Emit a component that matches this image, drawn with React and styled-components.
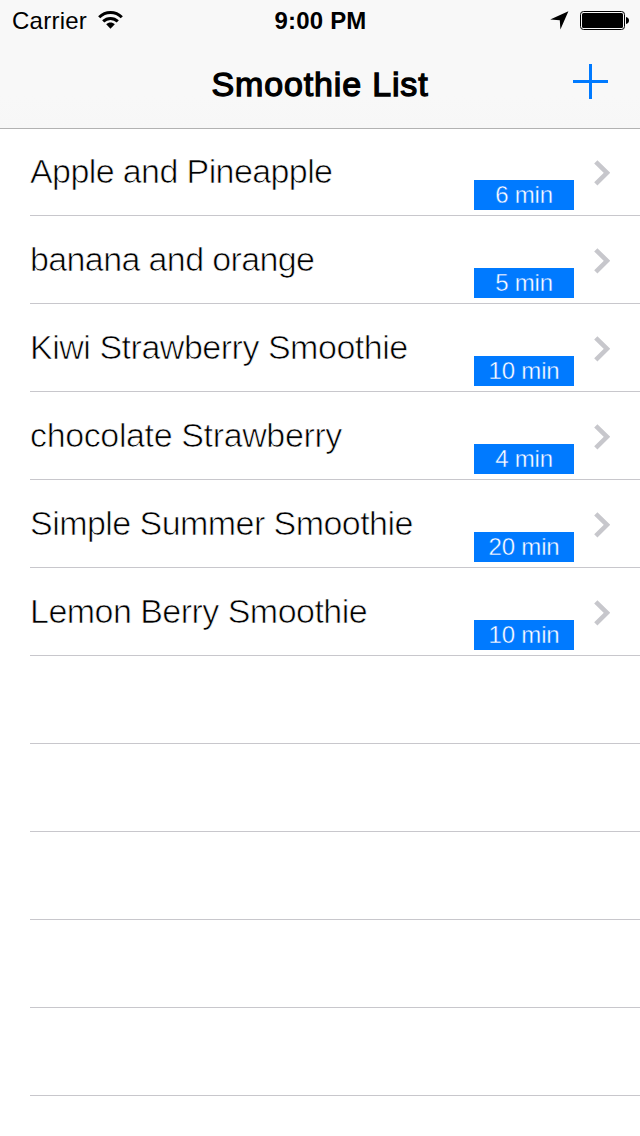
import React from "react";
import styled, { createGlobalStyle } from "styled-components";

const GlobalStyle = createGlobalStyle`
  * { box-sizing: border-box; }
  body {
    margin: 0;
    background: #fff;
    color: #000;
    font-family: "Liberation Sans", Arial, sans-serif;
  }
`;

const Screen = styled.main`
  width: 640px;
  height: 1136px;
  overflow: hidden;
  background: #fff;
`;

const Header = styled.header`
  height: 128px;
  background: linear-gradient(#f8f8f8 75%, #f7f7f7);
  box-shadow: 0 1px 0 #b2b2b2;
`;

const StatusBar = styled.div`
  display: grid;
  grid-template-columns: 1fr auto 1fr;
  align-items: center;
  height: 40px;
  padding: 0 11px 0 12px;
  font-size: 24px;
  line-height: 39px;
`;

const StatusGroup = styled.div`
  display: flex;
  align-items: center;
  justify-content: ${(p) => (p.$end ? "flex-end" : "flex-start")};
  gap: 11px;
`;

const Carrier = styled.span`
  padding-top: 1px;
  letter-spacing: 0.25px;
`;

const Clock = styled.time`
  padding-top: 1px;
  font-weight: 700;
  letter-spacing: 0.2px;
`;

const NavBar = styled.nav`
  display: grid;
  grid-template-columns: 1fr auto 1fr;
  align-items: center;
  height: 88px;
  padding: 0 32px;
`;

const Title = styled.h1`
  grid-column: 2;
  margin: 0;
  font-size: 34px;
  font-weight: 400;
  line-height: 88px;
  letter-spacing: 0.85px;
  -webkit-text-stroke: 1.3px #000;
`;

const AddButton = styled.button`
  display: flex;
  justify-self: end;
  margin: 0 0 5px;
  padding: 0;
  border: 0;
  background: none;
`;

const List = styled.ul`
  margin: 0;
  padding: 0 0 0 30px;
  list-style: none;
`;

const Row = styled.li`
  display: flex;
  height: 88px;
  padding-right: 30px;
  border-bottom: 1px solid #c8c7cc;
`;

const Name = styled.span`
  flex: 1;
  font-size: 34px;
  line-height: 86px;
  white-space: nowrap;
  letter-spacing: ${(p) => p.$spacing}px;
  -webkit-text-stroke: 0.7px #fff;
`;

const Duration = styled.span`
  width: 100px;
  height: 30px;
  margin: 52px 20px 0 0;
  background: #007aff;
  color: #fff;
  font-size: 24px;
  line-height: 29px;
  letter-spacing: -0.2px;
  text-align: center;
  -webkit-text-stroke: 0.4px #007aff;
`;

const Chevron = styled.svg`
  margin-top: 32px;
`;

const smoothies = [
  { name: "Apple and Pineapple", minutes: 6, spacing: -0.6 },
  { name: "banana and orange", minutes: 5, spacing: -0.62 },
  { name: "Kiwi Strawberry Smoothie", minutes: 10, spacing: -0.48 },
  { name: "chocolate Strawberry", minutes: 4, spacing: -0.37 },
  { name: "Simple Summer Smoothie", minutes: 20, spacing: -0.55 },
  { name: "Lemon Berry Smoothie", minutes: 10, spacing: -0.53 },
];
const emptyRows = [0, 1, 2, 3, 4];

const WifiIcon = () => (
  <svg width="25" height="18" viewBox="0 0 25 18">
    <g fill="none" stroke="#000" strokeWidth="3">
      <path d="M1.2 6.3C7.5-.1 17.5-.1 23.8 6.3" />
      <path d="M5.2 10.4C9.3 6.4 15.7 6.4 19.8 10.4" />
    </g>
    <path d="M8.2 13.3c2.4-2.3 6.2-2.3 8.6 0L12.5 17.8z" />
  </svg>
);

const LocationIcon = () => (
  <svg width="19" height="19" viewBox="0 0 19 19">
    <path d="M18.4.2 10.4 18.5 9.8 9.2.2 8.4z" />
  </svg>
);

const BatteryIcon = () => (
  <svg width="49" height="19" viewBox="0 0 49 19">
    <rect x=".5" y=".5" width="44" height="18" rx="3" fill="none" stroke="#000" />
    <rect x="2" y="2" width="41" height="15" rx="1.5" />
    <path d="M46 6c2 .3 3 1.6 3 3.5s-1 3.2-3 3.5z" />
  </svg>
);

export default function App() {
  return (
    <Screen>
      <GlobalStyle />
      <Header>
        <StatusBar>
          <StatusGroup>
            <Carrier>Carrier</Carrier>
            <WifiIcon />
          </StatusGroup>
          <Clock>9:00 PM</Clock>
          <StatusGroup $end>
            <LocationIcon />
            <BatteryIcon />
          </StatusGroup>
        </StatusBar>
        <NavBar>
          <Title>Smoothie List</Title>
          <AddButton aria-label="Add">
            <svg width="35" height="35" viewBox="0 0 35 35">
              <path d="M16 0h3v16h16v3H19v16h-3V19H0v-3h16z" fill="#007aff" />
            </svg>
          </AddButton>
        </NavBar>
      </Header>
      <List>
        {smoothies.map((s) => (
          <Row key={s.name}>
            <Name $spacing={s.spacing}>{s.name}</Name>
            <Duration>{s.minutes} min</Duration>
            <Chevron width="16" height="26" viewBox="0 0 16 26">
              <path d="M1.8 1.8 13 12.8 1.8 23.8" fill="none" stroke="#c7c7cc" strokeWidth="4.6" />
            </Chevron>
          </Row>
        ))}
        {emptyRows.map((i) => (
          <Row key={i} />
        ))}
      </List>
    </Screen>
  );
}
